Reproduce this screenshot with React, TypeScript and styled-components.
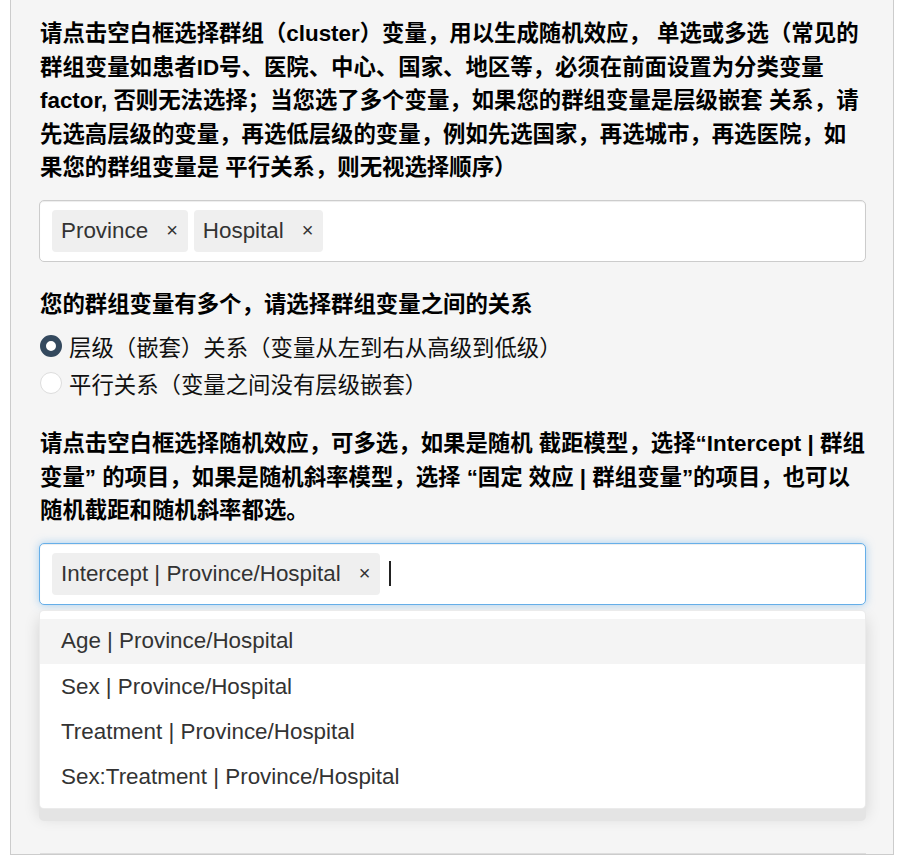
import React from 'react';
import styled, { createGlobalStyle, css } from 'styled-components';

const FONT = '"Liberation Sans", "Noto Sans CJK SC", sans-serif';

const GlobalStyle = createGlobalStyle`
  html, body {
    margin: 0;
    background: #ffffff;
    font-family: ${FONT};
  }
  * {
    box-sizing: border-box;
  }
`;

const Panel = styled.div`
  margin: 0 12px 0 10px;
  min-height: 855px;
  padding: 17px 27px 0 29px;
  background: #f5f5f5;
  border: 1px solid #cccccc;
  border-top: none;
  overflow: hidden;
`;

const Heading = styled.p`
  margin: 0 0 15px;
  font-size: 22.4px;
  line-height: 33.5px;
  font-weight: bold;
  color: #000;
`;

const Group = styled.div<{ $gap: number }>`
  margin-bottom: ${(p) => p.$gap}px;
`;

const SelectWrap = styled.div`
  position: relative;
  margin-left: -1px;
`;

const SelectBox = styled.div<{ $focused?: boolean }>`
  display: flex;
  align-items: center;
  gap: 6px;
  height: 62px;
  padding: 0 12px;
  background: #fff;
  border: 1px solid #cccccc;
  border-radius: 5px;
  box-shadow: inset 0 1px 1px rgba(0, 0, 0, 0.075);
  ${(p) => p.$focused && css`
    border-color: #66afe9;
    box-shadow: inset 0 1px 1px rgba(0, 0, 0, 0.075), 0 0 9px rgba(102, 175, 233, 0.55);
  `}
`;

const Tag = styled.span`
  display: inline-flex;
  align-items: center;
  height: 42px;
  padding: 0 10px 0 9px;
  background: #efefef;
  border-radius: 4px;
  font-size: 22.4px;
  color: #333;
  white-space: nowrap;
`;

const Remove = styled.span`
  margin-left: 18px;
  font-size: 20px;
  color: #333;
`;

const Caret = styled.span`
  width: 2px;
  height: 25px;
  margin-left: 3px;
  background: #222;
`;

const RadioTitle = styled.div`
  font-size: 22.4px;
  line-height: 33.5px;
  font-weight: bold;
  color: #000;
  margin-bottom: 6px;
`;

const RadioRow = styled.label`
  display: flex;
  align-items: center;
  gap: 7px;
  height: 37px;
  font-size: 22.4px;
  color: #111;
`;

const RadioDot = styled.span<{ $checked?: boolean }>`
  flex: none;
  width: 22px;
  height: 22px;
  border-radius: 50%;
  background: #fff;
  border: 1px solid #dddddd;
  ${(p) => p.$checked && css`
    border: 6px solid #34495e;
  `}
`;

const Dropdown = styled.div`
  position: absolute;
  top: calc(100% + 5px);
  left: 0;
  right: 0;
  z-index: 10;
  padding: 8px 0;
  background: #fff;
  border: 1px solid rgba(0, 0, 0, 0.08);
  border-radius: 5px;
  box-shadow: 0 12px 0 #e4e4e4, 0 8px 16px rgba(0, 0, 0, 0.14);
`;

const Option = styled.div<{ $active?: boolean }>`
  display: flex;
  align-items: center;
  height: 45.4px;
  padding-left: 21px;
  font-size: 22.4px;
  color: #333;
  background: ${(p) => (p.$active ? '#f4f4f4' : '#fff')};
`;

const Divider = styled.div`
  margin-top: 248px;
  border-top: 1px solid #dddddd;
`;

const clusters = ['Province', 'Hospital'];
const options = [
  'Age | Province/Hospital',
  'Sex | Province/Hospital',
  'Treatment | Province/Hospital',
  'Sex:Treatment | Province/Hospital',
];

function App() {
  return (
    <>
      <GlobalStyle />
      <Panel>
        <Heading>
          请点击空白框选择群组（cluster）变量，用以生成随机效应， 单选或多选（常见的群组变量如患者ID号、医院、中心、国家、地区等，必须在前面设置为分类变量 factor, 否则无法选择；当您选了多个变量，如果您的群组变量是层级嵌套 关系，请先选高层级的变量，再选低层级的变量，例如先选国家，再选城市，再选医院，如果您的群组变量是 平行关系，则无视选择顺序）
        </Heading>
        <Group $gap={26}>
          <SelectWrap>
            <SelectBox>
              {clusters.map((c) => (
                <Tag key={c}>
                  {c}
                  <Remove>×</Remove>
                </Tag>
              ))}
            </SelectBox>
          </SelectWrap>
        </Group>

        <Group $gap={26}>
          <RadioTitle>您的群组变量有多个，请选择群组变量之间的关系</RadioTitle>
          <RadioRow>
            <RadioDot $checked />
            层级（嵌套）关系（变量从左到右从高级到低级）
          </RadioRow>
          <RadioRow>
            <RadioDot />
            平行关系（变量之间没有层级嵌套）
          </RadioRow>
        </Group>

        <Heading>
          请点击空白框选择随机效应，可多选，如果是随机 截距模型，选择“Intercept | 群组变量” 的项目，如果是随机斜率模型，选择 “固定 效应 | 群组变量”的项目，也可以随机截距和随机斜率都选。
        </Heading>
        <SelectWrap>
          <SelectBox $focused>
            <Tag>
              Intercept | Province/Hospital
              <Remove>×</Remove>
            </Tag>
            <Caret />
          </SelectBox>
          <Dropdown>
            {options.map((o, i) => (
              <Option key={o} $active={i === 0}>{o}</Option>
            ))}
          </Dropdown>
        </SelectWrap>
        <Divider />
      </Panel>
    </>
  );
}

export default App;
